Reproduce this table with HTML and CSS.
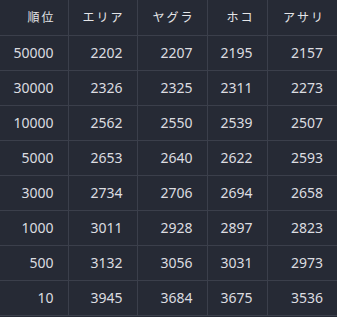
FILE: index.html
```html
<!DOCTYPE html>
<html lang="ja">
<head>
<meta charset="utf-8">
<link rel="stylesheet" href="styles.css">
</head>
<body>
<table class="rank">
  <thead>
    <tr><th>順位</th><th>エリア</th><th>ヤグラ</th><th>ホコ</th><th>アサリ</th></tr>
  </thead>
  <tbody>
    <tr><td>50000</td><td>2202</td><td>2207</td><td>2195</td><td>2157</td></tr>
    <tr><td>30000</td><td>2326</td><td>2325</td><td>2311</td><td>2273</td></tr>
    <tr><td>10000</td><td>2562</td><td>2550</td><td>2539</td><td>2507</td></tr>
    <tr><td>5000</td><td>2653</td><td>2640</td><td>2622</td><td>2593</td></tr>
    <tr><td>3000</td><td>2734</td><td>2706</td><td>2694</td><td>2658</td></tr>
    <tr><td>1000</td><td>3011</td><td>2928</td><td>2897</td><td>2823</td></tr>
    <tr><td>500</td><td>3132</td><td>3056</td><td>3031</td><td>2973</td></tr>
    <tr><td>10</td><td>3945</td><td>3684</td><td>3675</td><td>3536</td></tr>
  </tbody>
</table>
</body>
</html>
```
FILE: styles.css
```css
html, body {
  margin: 0;
  padding: 0;
  background: #262a35;
}
.rank {
  border-collapse: collapse;
  width: 337px;
  table-layout: fixed;
  background: #262a35;
  color: #dcdde0;
  font-family: "Noto Sans", "Noto Sans CJK JP", sans-serif;
  font-size: 14px;
}
.rank th, .rank td {
  height: 35px;
  padding: 0 14px 0 0;
  text-align: right;
  border: 1px solid #3b3f4b;
  box-sizing: border-box;
}
.rank th {
  font-weight: normal;
  font-size: 12px;
  letter-spacing: 2px;
  padding-right: 12px;
  color: #e4e5e8;
}
.rank tr > :nth-child(1) { width: 68px; }
.rank tr > :nth-child(2) { width: 69px; }
.rank tr > :nth-child(3) { width: 70px; }
.rank tr > :nth-child(4) { width: 60px; }
.rank tr > :nth-child(5) { width: 70px; }
.rank tr > :first-child { border-left: none; }
.rank tr > :last-child { border-right: none; }
.rank thead th { border-top: none; }
```
